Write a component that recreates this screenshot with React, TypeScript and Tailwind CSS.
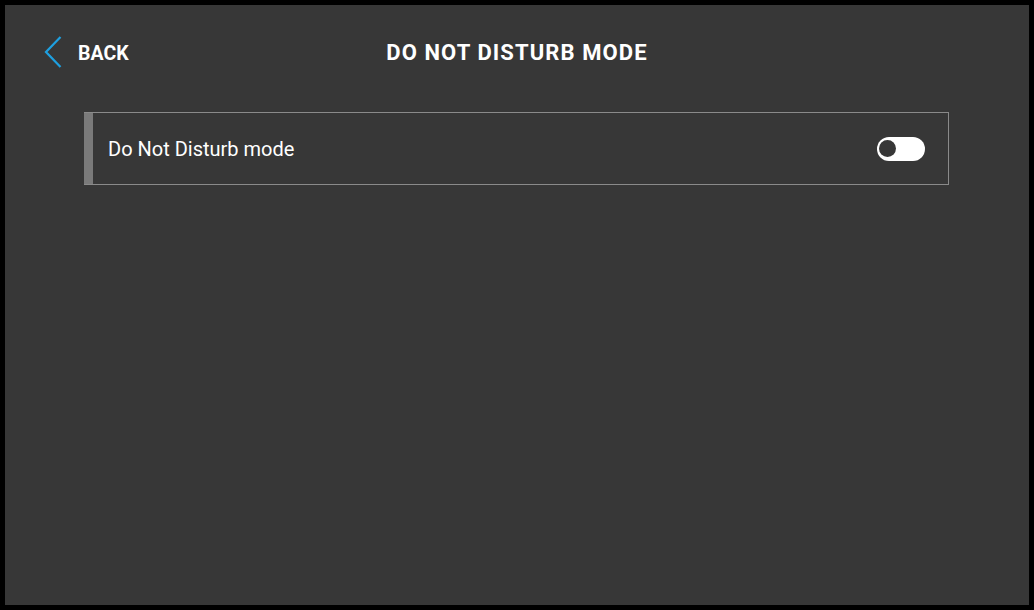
export default function App() {
  return (
    <div className="w-[1034px] h-[610px] bg-black pt-[5px] pl-[5px] pr-[5px] pb-[5px] font-['Roboto',sans-serif]">
      <div className="w-full h-full bg-[#373737] flex flex-col">
        {/* Header */}
        <div className="relative h-[94px] flex items-center justify-center">
          <button className="absolute left-[39px] top-[31px] flex items-center h-[32px]">
            <svg width="18" height="32" viewBox="0 0 18 32" fill="none">
              <path d="M16.5 1L2 16L16.5 31" stroke="#1ea0e0" strokeWidth="2.2" />
            </svg>
            <span className="ml-[16px] mt-[3px] text-white font-bold text-[19.5px] leading-none">BACK</span>
          </button>
          <h1 className="text-white font-bold text-[22px] tracking-[1.1px] leading-none mt-[1px]">DO NOT DISTURB MODE</h1>
        </div>

        {/* Setting row */}
        <div className="ml-[79px] mr-[80px] mt-[13px] h-[73px] flex border border-[#8a8a8a] border-l-0">
          <div className="w-[9px] bg-[#7a7a7a]" />
          <div className="flex-1 flex items-center justify-between pl-[15px] pr-[23px]">
            <span className="text-white text-[20px] leading-none">Do Not Disturb mode</span>
            <div className="w-[48px] h-[24px] rounded-full bg-white flex items-center pl-[2px]">
              <div className="w-[17px] h-[17px] rounded-full bg-[#373737]" />
            </div>
          </div>
        </div>
      </div>
    </div>
  );
}
